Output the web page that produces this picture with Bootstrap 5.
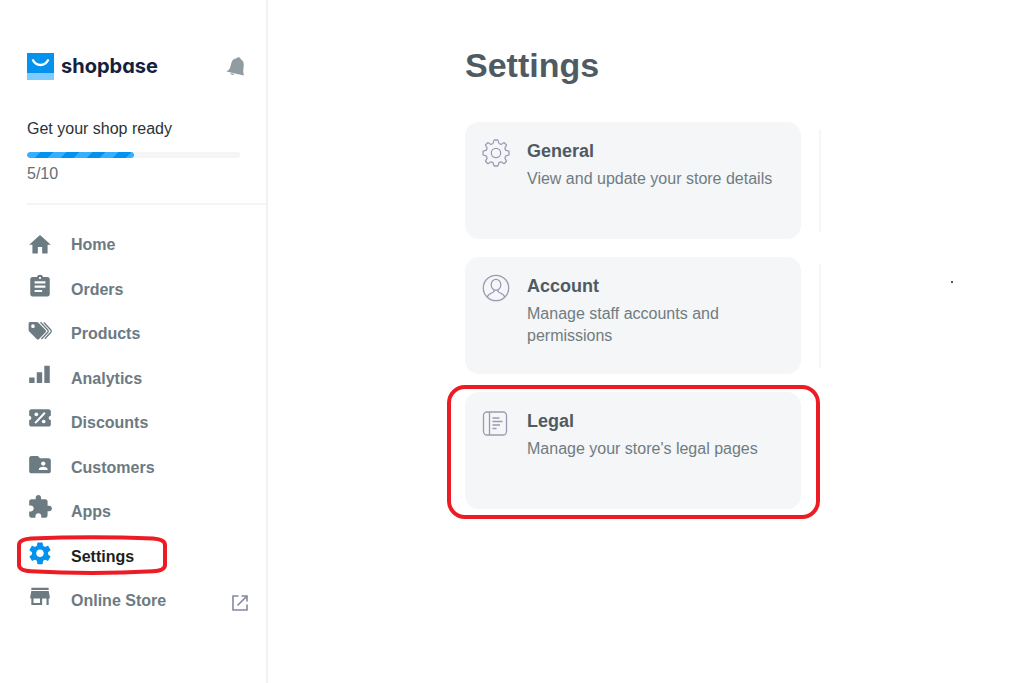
<!DOCTYPE html>
<html lang="en">
<head>
<meta charset="utf-8">
<meta name="viewport" content="width=device-width, initial-scale=1">
<title>Settings - ShopBase</title>
<link href="https://cdn.jsdelivr.net/npm/bootstrap@5.3.0/dist/css/bootstrap.min.css" rel="stylesheet">
<style>
  body { font-family: "Liberation Sans", Arial, sans-serif; font-size: 16px; line-height: 22px; color: #2b3337; background: #fff; }
  a { text-decoration: none; }
  .sidebar { width: 268px; padding: 52px 0 32px 27px; border-right: 2px solid #eff1f4; }
  .brand { color: #14213d; font-family: Inter, "Liberation Sans", sans-serif; font-feature-settings: "cv11"; font-weight: 700; font-size: 20px; line-height: 28px; gap: 7px; }
  .bell { width: 20px; height: 22px; margin-right: 20px; color: #919ca2; }
  .setup { padding: 38px 26px 18px 0; }
  .progress { --bs-progress-height: 6px; --bs-progress-bg: #f4f5f7; --bs-progress-bar-bg: #0592ef; --bs-progress-border-radius: 3px; margin: 12px 0 5px; }
  .progress-bar { border-radius: 3px; background-image: linear-gradient(135deg, #38aeff 25%, transparent 25%, transparent 50%, #38aeff 50%, #38aeff 75%, transparent 75%); background-size: 26px 26px; }
  .setup-count { color: #637077; }
  .rule { height: 2px; background: #f4f5f7; }
  .menu { min-height: 400px; margin: 18px 0 0; }
  .menu a { height: 44px; gap: 18px; color: #6c7a82; font-weight: 700; }
  .menu svg.glyph { width: 26px; height: 26px; margin-bottom: 8px; fill: currentColor; overflow: visible; }
  .menu a.active { color: #1b1f21; }
  .menu a.active .glyph { color: #0592ef; }
  .external { width: 18px; height: 18px; margin: 4px 17px 0 auto; }
  .mark-oval { position: absolute; left: -10px; top: 0; width: 150px; height: 40px; pointer-events: none; }
  .content { padding: 42px 24px 32px 197px; }
  h1 { font-size: 34px; line-height: 46px; font-weight: 700; color: #4f5b63; margin-bottom: 34px; }
  .tiles { gap: 18px; }
  .tile { flex: 0 1 336px; min-height: 117px; border-radius: 14px; background: #f4f6f8; padding: 17px; gap: 17px; color: #707c81; }
  .tile > svg { flex: none; width: 28px; height: 28px; fill: none; stroke: #9a9ab4; stroke-width: 1.3; }
  .tile h2 { font-size: 18px; line-height: 24px; font-weight: 700; color: #4f5b63; margin: 0 0 5px; }
  .tile p { margin: 0; }
  .edge { width: 2px; margin: 7px 0 6px 18px; background: #f4f6f8; border-radius: 2px 0 0 2px; }
  .speck { width: 2px; height: 2px; background: #555; margin: 24px 0 0 130px; }
  .ring { position: absolute; inset: -7px -19px -10px -18px; border: 4px solid #ed1c24; border-radius: 18px; pointer-events: none; }
</style>
</head>
<body>
<div class="d-flex min-vh-100">
  <aside class="sidebar flex-shrink-0">
    <header class="d-flex align-items-center justify-content-between">
      <a href="#" class="brand d-flex align-items-center">
        <svg width="27" height="27" viewBox="0 0 27 27" aria-hidden="true"><path fill="#0592ef" d="M0 0h27v27H0z"/><path fill="#7ecbff" d="M0 20h27v7H0z"/><path fill="none" stroke="#fff" stroke-width="2.400" stroke-linecap="round" d="M6 7.300c3.300 6.200 11.700 6.200 15 0"/></svg>
        <span>shopbase</span>
      </a>
      <button type="button" class="btn p-0 border-0 lh-1" aria-label="Notifications">
        <svg class="bell" viewBox="0 0 20 22"><g fill="currentColor"><path d="M13.500 2.400c.9.300 1.200 1 1 1.700 2.600 1.400 3.500 3.600 3.300 6.100l-.6 5.600.6 4.700-17.300-4c2-1.300 3.200-2.300 3.700-4.300l1.200-4.500c.7-2.600 2.700-4.200 5.200-4.400.3-.7 1.800-1.300 2.900-.9z"/><path d="M4.300 18l4 .9c-.6 1.600-3.500 1.200-4-.9z"/></g></svg>
      </button>
    </header>
    <section class="setup">
      <div>Get your shop ready</div>
      <div class="progress" role="progressbar" aria-label="Shop setup" aria-valuenow="5" aria-valuemin="0" aria-valuemax="10">
        <div class="progress-bar" style="width: 50%"></div>
      </div>
      <div class="setup-count">5/10</div>
    </section>
    <div class="rule"></div>
    <nav aria-label="Main">
      <ul class="menu list-unstyled d-flex flex-column justify-content-between">
        <li><a href="#" class="d-flex align-items-center"><svg class="glyph" viewBox="0 -3.500 24 24"><path d="M10 20v-6h4v6h5v-8h3L12 3 2 12h3v8z"/></svg>Home</a></li>
        <li><a href="#" class="d-flex align-items-center"><svg class="glyph" viewBox="0 -.6 24 24"><path d="M19 3h-4.180C14.400 1.840 13.300 1 12 1s-2.400.84-2.820 2H5c-1.100 0-2 .9-2 2v14c0 1.100.9 2 2 2h14c1.100 0 2-.9 2-2V5c0-1.100-.9-2-2-2zm-7 0c.55 0 1 .45 1 1s-.45 1-1 1-1-.45-1-1 .45-1 1-1zm2 14H7v-2h7v2zm3-4H7v-2h10v2zm0-4H7V7h10v2z"/></svg>Orders</a></li>
        <li><a href="#" class="d-flex align-items-center"><svg class="glyph" viewBox="0 -1.500 24 24"><path fill-rule="evenodd" d="M1.500 4.500C1.500 3.600 2.100 3 3 3h5.900c.6 0 1 .2 1.400.6l6.800 6.800c.6.700.6 1.500 0 2.200l-6 6.200c-.7.700-1.500.7-2.200 0l-6.800-7c-.4-.4-.6-.8-.6-1.400zM5.500 5.300a1.700 1.700 0 1 0 0 3.400 1.700 1.700 0 0 0 0-3.400z"/><path fill="none" stroke="currentColor" stroke-width="1.200" d="M12.500 3.300l6.700 7.200c.6.700.6 1.400 0 2.100l-5.900 6.200M15.600 3.600l6.400 6.900c.6.700.6 1.400 0 2.100l-5.500 6"/></svg>Products</a></li>
        <li><a href="#" class="d-flex align-items-center"><svg class="glyph" viewBox="0 .6 24 24"><path d="M2 15h5v5H2zM9 10h5v10H9zM16 4h5v16h-5z"/></svg>Analytics</a></li>
        <li><a href="#" class="d-flex align-items-center"><svg class="glyph" viewBox="0 1 24 24"><path fill-rule="evenodd" d="M4 4h16c1.100 0 2 .9 2 2v4c-1.100 0-2 .9-2 2s.9 2 2 2v4c0 1.100-.9 2-2 2H4c-1.100 0-2-.9-2-2v-4c1.100 0 2-.9 2-2s-.9-2-2-2V6c0-1.100.9-2 2-2z"/><path fill="none" stroke="#fff" stroke-width="1.900" d="M7.500 16.800l9-9.600"/><circle cx="8.600" cy="8.700" r="1.700" fill="#fff"/><circle cx="15.400" cy="15.300" r="1.700" fill="#fff"/></svg>Discounts</a></li>
        <li><a href="#" class="d-flex align-items-center"><svg class="glyph" viewBox="0 -.6 24 24"><path d="M20 6h-8l-2-2H4c-1.100 0-2 .9-2 2v12c0 1.100.9 2 2 2h16c1.100 0 2-.9 2-2V8c0-1.100-.9-2-2-2zm-5 3c1.100 0 2 .9 2 2s-.9 2-2 2-2-.9-2-2 .9-2 2-2zm4 8h-8v-1c0-1.330 2.670-2 4-2s4 .67 4 2v1z"/></svg>Customers</a></li>
        <li><a href="#" class="d-flex align-items-center"><svg class="glyph" viewBox="0 1 24 24"><path d="M20.500 11H19V7c0-1.100-.9-2-2-2h-4V3.500C13 2.120 11.880 1 10.500 1S8 2.120 8 3.500V5H4c-1.100 0-1.990.9-1.990 2v3.800H3.500c1.490 0 2.700 1.210 2.700 2.700s-1.210 2.700-2.700 2.700H2V20c0 1.100.9 2 2 2h3.800v-1.500c0-1.490 1.210-2.700 2.700-2.700 1.490 0 2.700 1.210 2.700 2.700V22H17c1.100 0 2-.9 2-2v-4h1.500c1.380 0 2.500-1.120 2.500-2.500S21.880 11 20.500 11z"/></svg>Apps</a></li>
        <li class="position-relative"><a href="#" class="active d-flex align-items-center" aria-current="page"><svg class="glyph" viewBox="0 -.3 24 24"><path d="M19.430 12.980c.04-.32.07-.64.07-.98s-.03-.66-.07-.98l2.110-1.650c.19-.15.24-.42.12-.64l-2-3.460c-.12-.22-.39-.3-.61-.22l-2.490 1c-.52-.4-1.080-.73-1.690-.98l-.38-2.650C14.460 2.180 14.250 2 14 2h-4c-.25 0-.46.18-.49.42l-.38 2.650c-.61.25-1.170.59-1.690.98l-2.490-1c-.23-.09-.49 0-.61.22l-2 3.460c-.13.22-.07.49.12.64l2.110 1.650c-.04.32-.07.65-.07.98s.03.66.07.98l-2.110 1.650c-.19.15-.24.42-.12.64l2 3.460c.12.22.39.3.61.22l2.490-1c.52.4 1.080.73 1.690.98l.38 2.650c.03.24.24.42.49.42h4c.25 0 .46-.18.49-.42l.38-2.650c.61-.25 1.170-.59 1.690-.98l2.490 1c.23.09.49 0 .61-.22l2-3.460c.12-.22.07-.49-.12-.64l-2.110-1.650zM12 15.500c-1.930 0-3.500-1.570-3.500-3.500s1.570-3.500 3.500-3.500 3.500 1.570 3.500 3.500-1.570 3.500-3.500 3.500z"/></svg>Settings</a>
          <svg class="mark-oval" viewBox="0 0 150 40" aria-hidden="true"><path fill="none" stroke="#ed1c24" stroke-width="4" d="M14 3.500Q75 1.200 136 3.500Q148 4.500 148 10V30Q148 35.500 136 36.300Q75 39.500 14 36.300Q2 35.500 2 30V10Q2 4.500 14 3.500z"/></svg></li>
        <li><a href="#" class="d-flex align-items-center"><svg class="glyph" viewBox="0 .5 24 24"><path d="M20 4H4v2h16V4zm1 10v-2l-1-5H4l-1 5v2h1v6h10v-6h4v6h2v-6h1zm-9 4H6v-4h6v4z"/></svg>Online Store<svg class="external" viewBox="0 0 18 18" fill="none" stroke="#85899f" stroke-width="1.600"><path d="M7.500 2H2v14h14v-5.500M10.500 2H16v5.500M16 2L6.500 11.500"/></svg></a></li>
      </ul>
    </nav>
  </aside>
  <main class="content flex-grow-1">
    <h1>Settings</h1>
    <div class="tiles d-flex flex-column">
      <div class="d-flex">
        <a href="#" class="tile d-flex">
          <svg viewBox="0 0 28 28"><path stroke-linejoin="round" d="M12.300 1h3.400c.8 0 .8 3.200 1.300 3.500l2 .8c.7.300 2.700-2.200 3.300-1.600l2.200 2.200c.6.600-1.900 2.600-1.600 3.300l.8 2c.3.500 3.300.3 3.300 1.100v3.400c0 .8-3 .8-3.300 1.300l-.8 2c-.3.700 2.200 2.700 1.600 3.300l-2.200 2.200c-.6.600-2.600-1.900-3.300-1.600l-2 .8c-.5.300-.5 3.300-1.300 3.300h-3.400c-.8 0-.8-3-1.300-3.300l-2-.8c-.7-.3-2.700 2.200-3.300 1.600l-2.200-2.200c-.6-.6 1.900-2.600 1.600-3.300l-.8-2c-.3-.5-3.300-.5-3.300-1.300v-3.400c0-.8 3-.6 3.300-1.100l.8-2c.3-.7-2.200-2.700-1.600-3.300l2.200-2.200c.6-.6 2.600 1.900 3.300 1.600l2-.8c.5-.3.500-3.500 1.300-3.500z"/><circle cx="14" cy="14" r="4.700"/></svg>
          <div><h2>General</h2><p>View and update your store details</p></div>
        </a>
        <div class="edge"></div>
      </div>
      <div class="d-flex">
        <a href="#" class="tile d-flex">
          <svg viewBox="0 0 28 28"><circle cx="14" cy="14" r="12.700"/><ellipse cx="14" cy="10.800" rx="4.800" ry="5.500"/><path d="M12 16v1.300c-.5 1.800-5.800 1.800-6.800 5.700M16 16v1.300c.5 1.800 5.800 1.800 6.800 5.700"/></svg>
          <div><h2>Account</h2><p>Manage staff accounts and permissions</p></div>
        </a>
        <div class="edge"></div>
        <div class="speck"></div>
      </div>
      <div class="d-flex">
        <a href="#" class="tile d-flex position-relative">
          <svg viewBox="0 0 28 28"><rect x="1.500" y="3" width="23" height="23" rx="3.500"/><path d="M7.500 3v23M10.500 9h7M10.500 12.500h10M10.500 16h7.500M10.500 19.500h4"/></svg>
          <div><h2>Legal</h2><p>Manage your store's legal pages</p></div>
          <span class="ring"></span>
        </a>
      </div>
    </div>
  </main>
</div>
<script src="https://cdn.jsdelivr.net/npm/bootstrap@5.3.0/dist/js/bootstrap.bundle.min.js"></script>
</body>
</html>
